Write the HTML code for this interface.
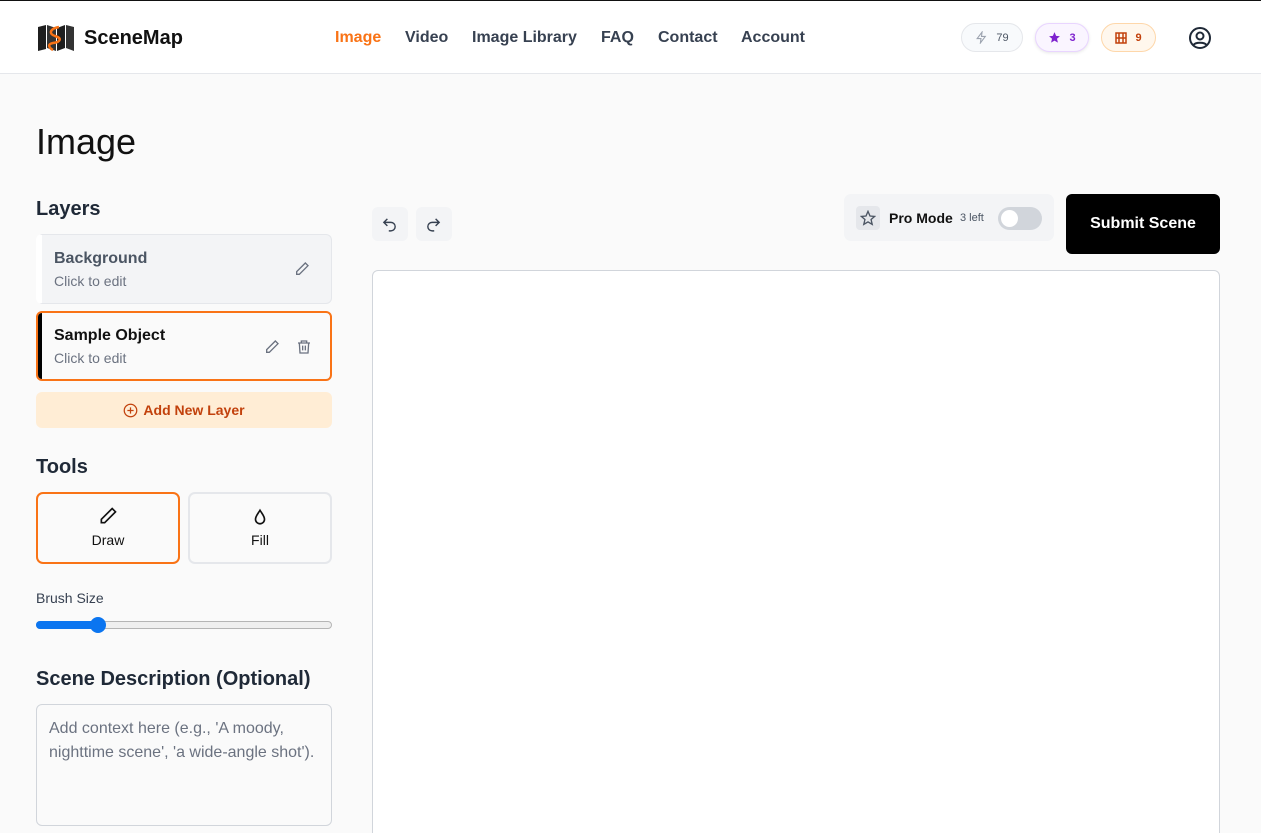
<!DOCTYPE html>
<html><head><meta charset="utf-8"><style>
*{box-sizing:border-box;margin:0;padding:0}
html,body{width:1261px;height:833px;overflow:hidden}
body{background:#fafafa;font-family:"Liberation Sans",sans-serif;color:#111;position:relative}
.hdr{position:absolute;left:0;top:0;width:1261px;height:74px;background:#fff;border-top:1px solid #111;border-bottom:1px solid #e5e7eb}
.logo{position:absolute;left:37px;top:23px;display:flex;align-items:center}
.logo span{font-weight:bold;font-size:20px;margin-left:9px;color:#111}
.nav{position:absolute;top:28px;font-size:16px;font-weight:bold;color:#374151}
.badge{position:absolute;top:22px;height:29px;border-radius:15px;display:flex;align-items:center;justify-content:center;font-size:11px;gap:8px}
.abs{position:absolute}
h1{position:absolute;left:36px;top:121px;font-size:36px;font-weight:normal;color:#111}
h2{position:absolute;font-size:20px;font-weight:bold;color:#1f2937}
.layer{position:absolute;left:36px;width:296px;border-radius:6px}
.t1{position:absolute;left:18px;font-size:16px;font-weight:bold}
.t2{position:absolute;left:18px;font-size:14px;color:#6b7280}
.tool{position:absolute;top:492px;width:144px;height:72px;border-radius:7px;background:#fafafa;text-align:center;font-size:14px}
</style></head><body>
<div class="hdr">
 <div class="logo">
  <svg width="38" height="28" viewBox="0 0 38 28"><polygon points="1,3 9,1 9,25 1,27" fill="#1f1f1f"/><polygon points="10,1 19,4 19,27 10,24" fill="#333"/><polygon points="20,4 28,1 28,24 20,27" fill="#1f1f1f"/><polygon points="29,1 37,3 37,27 29,24" fill="#333"/><path d="M22 3 C12 5,12 10,18 12 C25 14,24 18,16 19 C10 20,12 24,16 26" stroke="#f97316" stroke-width="2.5" fill="none"/></svg>
  <span>SceneMap</span>
 </div>
 <div class="nav" style="left:335px;color:#f97316">Image</div>
 <div class="nav" style="left:405px">Video</div>
 <div class="nav" style="left:472px">Image Library</div>
 <div class="nav" style="left:601px">FAQ</div>
 <div class="nav" style="left:658px">Contact</div>
 <div class="nav" style="left:741px">Account</div>
 <div class="badge" style="left:961px;width:62px;background:#f8fafc;border:1px solid #e5e7eb;color:#4b5563"><svg width="13" height="13" viewBox="0 0 24 24" fill="none" stroke="#9ca3af" stroke-width="2"><path d="M13 2L4 14h7l-1 8 9-12h-7z"/></svg>79</div>
 <div class="badge" style="left:1035px;width:54px;background:#faf5ff;border:1px solid #e9d5ff;color:#7e22ce;font-weight:bold;box-shadow:0 1px 3px rgba(0,0,0,.1)"><svg width="13" height="13" viewBox="0 0 24 24" fill="#7e22ce"><path d="M12 2l3 7 7 .6-5.4 4.7 1.7 7.2L12 17.8 5.7 21.5l1.7-7.2L2 9.6 9 9z"/></svg>3</div>
 <div class="badge" style="left:1101px;width:55px;background:#fff7ed;border:1px solid #fed7aa;color:#c2410c;font-weight:bold"><svg width="12" height="12" viewBox="0 0 12 12" fill="none" stroke="#c2410c" stroke-width="1.5"><rect x="1" y="1" width="10" height="10"/><path d="M4 1v10M8 1v10M1 6h10"/></svg>9</div>
 <svg class="abs" style="left:1188px;top:25px" width="24" height="24" viewBox="0 0 24 24" fill="none" stroke="#1f2937" stroke-width="2"><circle cx="12" cy="12" r="10"/><circle cx="12" cy="10" r="3.5"/><path d="M5.5 19c2-3 11-3 13 0"/></svg>
</div>
<h1>Image</h1>
<h2 style="left:36px;top:198px">Layers</h2>
<div class="layer" style="top:234px;height:70px;background:#f3f4f6;border:1px solid #e5e7eb;border-left:6px solid #fff">
 <div class="t1" style="top:15px;left:12px;color:#4b5563">Background</div><div class="t2" style="top:38px;left:12px">Click to edit</div>
 <svg class="abs" style="left:252px;top:26px" width="16" height="16" viewBox="0 0 24 24" fill="none" stroke="#6b7280" stroke-width="2"><path d="M17 3l4 4L8 20H4v-4z"/></svg>
</div>
<div class="layer" style="top:311px;height:70px;background:#fafafa;border:2px solid #f97316;overflow:hidden">
 <div class="abs" style="left:0;top:0;width:4px;height:70px;background:#000"></div>
 <div class="t1" style="top:14px;left:16px">Sample Object</div><div class="t2" style="top:37px;left:16px">Click to edit</div>
 <svg class="abs" style="left:226px;top:26px" width="16" height="16" viewBox="0 0 24 24" fill="none" stroke="#6b7280" stroke-width="2"><path d="M17 3l4 4L8 20H4v-4z"/></svg>
 <svg class="abs" style="left:258px;top:26px" width="16" height="16" viewBox="0 0 24 24" fill="none" stroke="#6b7280" stroke-width="2"><path d="M3 6h18M8 6V3h8v3M5 6l1 15h12l1-15M10 10v7M14 10v7"/></svg>
</div>
<div class="layer" style="top:392px;height:36px;background:#ffedd5;color:#c2410c;font-weight:bold;font-size:14px;display:flex;align-items:center;justify-content:center;gap:5px"><svg width="15" height="15" viewBox="0 0 24 24" fill="none" stroke="#c2410c" stroke-width="2"><circle cx="12" cy="12" r="10"/><path d="M12 7v10M7 12h10"/></svg>Add New Layer</div>
<h2 style="left:36px;top:456px">Tools</h2>
<div class="tool" style="left:36px;border:2px solid #f97316"><svg style="margin-top:12px" width="20" height="20" viewBox="0 0 24 24" fill="none" stroke="#111" stroke-width="2"><path d="M17 3l4 4L8 20H4v-4z"/></svg><div style="margin-top:3px">Draw</div></div>
<div class="tool" style="left:188px;border:2px solid #e5e7eb"><svg style="margin-top:14px" width="18" height="18" viewBox="0 0 24 24" fill="none" stroke="#111" stroke-width="2.2"><path d="M12 3c-3 5-6 8-6 12a6 6 0 0 0 12 0c0-4-3-7-6-12z"/></svg><div style="margin-top:3px">Fill</div></div>
<div class="abs" style="left:36px;top:590px;font-size:14px;color:#374151">Brush Size</div>
<div class="abs" style="left:36px;top:621px;width:296px;height:8px;border-radius:4px;background:#efefef;border:1px solid #b5b5b5"></div>
<div class="abs" style="left:36px;top:621px;width:62px;height:8px;border-radius:4px;background:#0b75f0"></div>
<div class="abs" style="left:90px;top:617px;width:16px;height:16px;border-radius:50%;background:#0b75f0"></div>
<h2 style="left:36px;top:668px">Scene Description (Optional)</h2>
<div class="abs" style="left:36px;top:704px;width:296px;height:122px;border:1px solid #d1d5db;border-radius:6px;background:#fafafa;padding:12px;font-size:16px;line-height:24px;color:#6b7280">Add context here (e.g., 'A moody, nighttime scene', 'a wide-angle shot').</div>
<div class="abs" style="left:372px;top:207px;width:36px;height:34px;border-radius:6px;background:#f3f4f6"><svg style="margin:9px" width="17" height="17" viewBox="0 0 24 24" fill="none" stroke="#374151" stroke-width="2"><path d="M9 4L4 9l5 5M4 9h10a6 6 0 0 1 0 12h-3"/></svg></div>
<div class="abs" style="left:416px;top:207px;width:36px;height:34px;border-radius:6px;background:#f3f4f6"><svg style="margin:9px" width="17" height="17" viewBox="0 0 24 24" fill="none" stroke="#374151" stroke-width="2"><path d="M15 4l5 5-5 5M20 9H10a6 6 0 0 0 0 12h3"/></svg></div>
<div class="abs" style="left:844px;top:194px;width:210px;height:47px;border-radius:7px;background:#f3f4f6">
 <div class="abs" style="left:12px;top:12px;width:24px;height:24px;border-radius:4px;background:#e5e7eb"><svg style="margin:4px" width="16" height="16" viewBox="0 0 24 24" fill="none" stroke="#4b5563" stroke-width="2"><path d="M12 2l3 7 7 .6-5.4 4.7 1.7 7.2L12 17.8 5.7 21.5l1.7-7.2L2 9.6 9 9z"/></svg></div>
 <div class="abs" style="left:45px;top:16px;font-size:14px;font-weight:bold">Pro Mode</div>
 <div class="abs" style="left:116px;top:18px;font-size:11px;color:#4b5563">3 left</div>
 <div class="abs" style="left:154px;top:13px;width:44px;height:23px;border-radius:12px;background:#d1d5db"><div class="abs" style="left:3px;top:3px;width:17px;height:17px;border-radius:50%;background:#fff"></div></div>
</div>
<div class="abs" style="left:1066px;top:194px;width:154px;height:60px;border-radius:6px;background:#000;color:#fff;font-weight:bold;font-size:16px;display:flex;align-items:center;justify-content:center">Submit Scene</div>
<div class="abs" style="left:372px;top:270px;width:848px;height:600px;background:#fff;border:1px solid #d1d5db;border-radius:6px"></div>
</body></html>
